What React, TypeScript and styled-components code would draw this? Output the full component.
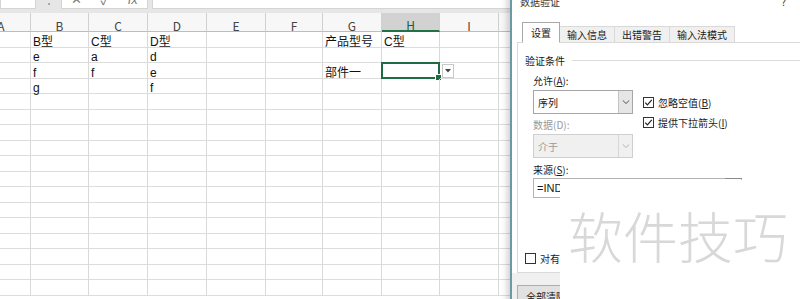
import React from "react";
import styled, { createGlobalStyle } from "styled-components";

const GlobalStyle = createGlobalStyle`
  html, body { margin: 0; padding: 0; background: #fff; }
  body {
    width: 800px;
    height: 299px;
    overflow: hidden;
    font-family: "Liberation Sans", "Noto Sans CJK SC", sans-serif;
  }
`;

const UI_FONT = `"Noto Sans CJK SC", "Liberation Sans", sans-serif`;

const columns = [
  { key: "A", w: 59 },
  { key: "B", w: 58 },
  { key: "C", w: 59 },
  { key: "D", w: 59 },
  { key: "E", w: 59 },
  { key: "F", w: 57 },
  { key: "G", w: 59 },
  { key: "H", w: 58 },
  { key: "I", w: 59 },
  { key: "J", w: 120 },
];

const data: Record<number, Record<string, string>> = {
  0: { B: "B型", C: "C型", D: "D型", G: "产品型号", H: "C型" },
  1: { B: "e", C: "a", D: "d" },
  2: { B: "f", C: "f", D: "e", G: "部件一" },
  3: { B: "g", D: "f" },
};

const ROW_COUNT = 17;
const ACTIVE_COL = "H";
const ACTIVE_ROW = 2;

const Screen = styled.div`
  position: relative;
  width: 800px;
  height: 299px;
  overflow: hidden;
  background: #fff;
`;

const Sheet = styled.div`
  display: flex;
  flex-direction: column;
  width: 800px;
`;

const FormulaBar = styled.div`
  display: flex;
  align-items: flex-start;
  height: 13px;
  background: #e6e6e6;
  overflow: hidden;
`;

const BarBox = styled.div<{ $w?: number }>`
  display: flex;
  align-items: center;
  justify-content: space-around;
  margin-top: -10px;
  height: 19px;
  width: ${(p) => (p.$w ? `${p.$w}px` : "auto")};
  flex: ${(p) => (p.$w ? "none" : "1")};
  background: #fff;
  border: 1px solid #d4d4d4;
  border-top: none;
  box-sizing: border-box;
  color: #7a7a7a;
  font-size: 13px;
`;

const BarDots = styled.div`
  width: 25px;
  margin-top: -10px;
  height: 19px;
  line-height: 19px;
  text-align: center;
  color: #888;
  font-size: 12px;
`;

const Grid = styled.div`
  display: grid;
  grid-template-columns: ${columns.map((c) => `${c.w}px`).join(" ")};
  grid-template-rows: 19px repeat(${ROW_COUNT}, 15.5px);
  margin-left: -28px;
`;

const ColHead = styled.div<{ $active?: boolean }>`
  display: flex;
  align-items: center;
  justify-content: center;
  padding-top: 6px;
  box-sizing: border-box;
  background: ${(p) => (p.$active ? "#d2d2d2" : "#f7f7f7")};
  border-right: 1px solid #d0d0d0;
  border-bottom: ${(p) => (p.$active ? "2px solid #217346" : "1px solid #bdbdbd")};
  color: ${(p) => (p.$active ? "#1c5e39" : "#444")};
  font-family: ${UI_FONT};
  font-size: 12px;
`;

const Cell = styled.div`
  position: relative;
  display: flex;
  align-items: flex-end;
  padding: 0 0 0 2px;
  box-sizing: border-box;
  border-right: 1px solid #d9d9d9;
  border-bottom: 1px solid #dcdcdc;
  font-size: 12px;
  line-height: 10px;
  color: #111;
  white-space: nowrap;
`;

const Selection = styled.div`
  position: absolute;
  top: -1px;
  left: -1px;
  right: -1px;
  bottom: -1px;
  border: 2px solid #1f6b42;
  pointer-events: none;
`;

const FillHandle = styled.div`
  position: absolute;
  right: -4px;
  bottom: -4px;
  width: 5px;
  height: 5px;
  background: #1f6b42;
  border: 1px solid #fff;
`;

const CellDropdown = styled.div`
  position: absolute;
  left: calc(100% + 3px);
  top: 1px;
  width: 12px;
  height: 14px;
  box-sizing: border-box;
  border: 1px solid #c8c8c8;
  background: #fff;
  display: flex;
  align-items: center;
  justify-content: center;
`;

const Dialog = styled.div`
  position: absolute;
  left: 510px;
  top: -9px;
  width: 300px;
  height: 320px;
  box-sizing: border-box;
  display: flex;
  flex-direction: column;
  background: #fff;
  border-left: 2px solid #6f98a5;
  box-shadow: -3px 0 6px rgba(0, 0, 0, 0.18);
  font-family: ${UI_FONT};
  font-size: 10px;
  color: #1a1a1a;
`;

const TitleBar = styled.div`
  display: flex;
  align-items: center;
  justify-content: space-between;
  height: 20px;
  padding: 0 24px 0 8px;
  font-size: 10px;
  color: #333;
`;

const TabStrip = styled.div`
  display: flex;
  align-items: flex-end;
  padding: 11px 0 0 10px;
  position: relative;
  z-index: 1;
`;

const Tab = styled.div<{ $active?: boolean }>`
  display: flex;
  align-items: center;
  justify-content: center;
  box-sizing: border-box;
  height: ${(p) => (p.$active ? "21px" : "17px")};
  width: ${(p) => (p.$active ? "38px" : "auto")};
  padding: ${(p) => (p.$active ? "0" : "0 7px")};
  margin-bottom: -1px;
  background: ${(p) => (p.$active ? "#fff" : "#f0f0f0")};
  border: 1px solid ${(p) => (p.$active ? "#a9a9a9" : "#d9d9d9")};
  border-bottom: 1px solid ${(p) => (p.$active ? "#fff" : "#d9d9d9")};
  border-left-width: ${(p) => (p.$active ? "1px" : "0")};
  white-space: nowrap;
`;

const Page = styled.div`
  margin-left: 5px;
  height: 231px;
  box-sizing: border-box;
  border: 1px solid #d9d9d9;
  border-right: none;
  background: #fff;
  display: flex;
  flex-direction: column;
  padding-left: 15px;
`;

const GroupHeader = styled.div`
  display: flex;
  align-items: center;
  gap: 7px;
  height: 14px;
  margin: 10px 0 0 -8px;
  &::after {
    content: "";
    flex: 1;
    height: 1px;
    background: #dcdcdc;
  }
`;

const FieldRow = styled.div`
  display: flex;
  gap: 10px;
  margin-top: 7px;
`;

const FieldColumn = styled.div`
  display: flex;
  flex-direction: column;
  width: 100px;
`;

const FieldLabel = styled.div<{ $gap: number; $disabled?: boolean }>`
  height: 14px;
  line-height: 14px;
  margin-top: ${(p) => p.$gap}px;
  color: ${(p) => (p.$disabled ? "#9a9a9a" : "#1a1a1a")};
  white-space: nowrap;
`;

const Combo = styled.div<{ $disabled?: boolean }>`
  display: flex;
  height: 24px;
  margin-top: 2px;
  box-sizing: border-box;
  border: 1px solid ${(p) => (p.$disabled ? "#cfcfcf" : "#a6a6a6")};
  background: ${(p) => (p.$disabled ? "#f0f0f0" : "#fff")};
  color: ${(p) => (p.$disabled ? "#9a9a9a" : "#1a1a1a")};
`;

const ComboText = styled.div`
  flex: 1;
  display: flex;
  align-items: center;
  padding-left: 4px;
`;

const ComboArrow = styled.div<{ $disabled?: boolean }>`
  width: 13px;
  display: flex;
  align-items: center;
  justify-content: center;
  border-left: 1px solid ${(p) => (p.$disabled ? "#d6d6d6" : "#c4c4c4")};
  background: ${(p) => (p.$disabled ? "#f0f0f0" : "#e6e6e6")};
`;

const CheckColumn = styled.div`
  display: flex;
  flex-direction: column;
  gap: 6px;
  margin-top: 21px;
`;

const CheckRow = styled.label<{ $offset?: number; $gap?: number }>`
  display: flex;
  align-items: center;
  gap: 4px;
  height: 14px;
  margin-left: ${(p) => p.$offset ?? 0}px;
  margin-top: ${(p) => p.$gap ?? 0}px;
  white-space: nowrap;
`;

const SourceInput = styled.div`
  position: relative;
  width: 209px;
  height: 20px;
  margin-top: 1px;
  box-sizing: border-box;
  border: 1px solid #b4b4b4;
  display: flex;
  align-items: center;
  padding-left: 3px;
  font-family: "Liberation Sans", sans-serif;
  font-size: 11px;
  &::after {
    content: "";
    position: absolute;
    right: -1px;
    top: -1px;
    width: 17px;
    height: 1px;
    background: #8a8a8a;
  }
`;

const Footer = styled.div`
  flex: 1;
  background: #f0f0f0;
  padding: 12px 0 0 5px;
`;

const FooterButton = styled.div`
  display: inline-flex;
  align-items: center;
  height: 22px;
  padding: 0 8px;
  box-sizing: border-box;
  border: 1px solid #adadad;
  background: #e1e1e1;
  white-space: nowrap;
`;

const Watermark = styled.div`
  position: absolute;
  left: 560px;
  top: 180px;
  width: 240px;
  height: 119px;
  box-sizing: border-box;
  background: #fff;
  padding: 27px 0 0 8px;
  font-family: "Noto Sans CJK SC", sans-serif;
  font-weight: 300;
  font-size: 55px;
  line-height: 55px;
  color: #d8d8d8;
  white-space: nowrap;
`;

function CheckBox({ checked }: { checked?: boolean }) {
  return (
    <svg width="11" height="11" viewBox="0 0 11 11">
      <rect x="0.5" y="0.5" width="10" height="10" fill="#fff" stroke="#333" />
      {checked && <path d="M2.2 5.6 L4.4 7.8 L8.8 2.8" fill="none" stroke="#222" strokeWidth="1.2" />}
    </svg>
  );
}

function Chevron({ color }: { color: string }) {
  return (
    <svg width="8" height="6" viewBox="0 0 8 6">
      <path d="M0.8 1.5 L4 4.5 L7.2 1.5" fill="none" stroke={color} strokeWidth="1" />
    </svg>
  );
}

export default function App() {
  return (
    <>
      <GlobalStyle />
      <Screen>
        <Sheet>
          <FormulaBar>
            <BarBox $w={36} />
            <BarDots>⋮</BarDots>
            <BarBox $w={87}>
              <span>✕</span>
              <span>✓</span>
              <span style={{ fontStyle: "italic" }}>fx</span>
            </BarBox>
            <div style={{ width: 4 }} />
            <BarBox />
          </FormulaBar>
          <Grid>
            {columns.map((c) => (
              <ColHead key={c.key} $active={c.key === ACTIVE_COL}>
                {c.key}
              </ColHead>
            ))}
            {Array.from({ length: ROW_COUNT }).map((_, r) =>
              columns.map((c) => {
                const active = r === ACTIVE_ROW && c.key === ACTIVE_COL;
                return (
                  <Cell key={`${r}-${c.key}`}>
                    {data[r]?.[c.key] ?? ""}
                    {active && (
                      <>
                        <Selection>
                          <FillHandle />
                        </Selection>
                        <CellDropdown>
                          <svg width="6" height="4" viewBox="0 0 6 4">
                            <path d="M0 0 H6 L3 3.5 Z" fill="#444" />
                          </svg>
                        </CellDropdown>
                      </>
                    )}
                  </Cell>
                );
              })
            )}
          </Grid>
        </Sheet>

        <Dialog>
          <TitleBar>
            <span>数据验证</span>
            <span>?</span>
          </TitleBar>
          <TabStrip>
            <Tab $active>设置</Tab>
            <Tab>输入信息</Tab>
            <Tab>出错警告</Tab>
            <Tab>输入法模式</Tab>
          </TabStrip>
          <Page>
            <GroupHeader>验证条件</GroupHeader>
            <FieldRow>
              <FieldColumn>
                <FieldLabel $gap={0}>
                  允许(<u>A</u>):
                </FieldLabel>
                <Combo>
                  <ComboText>序列</ComboText>
                  <ComboArrow>
                    <Chevron color="#555" />
                  </ComboArrow>
                </Combo>
                <FieldLabel $gap={4} $disabled>
                  数据(D):
                </FieldLabel>
                <Combo $disabled>
                  <ComboText>介于</ComboText>
                  <ComboArrow $disabled>
                    <Chevron color="#b5b5b5" />
                  </ComboArrow>
                </Combo>
                <FieldLabel $gap={5}>
                  来源(<u>S</u>):
                </FieldLabel>
              </FieldColumn>
              <CheckColumn>
                <CheckRow>
                  <CheckBox checked />
                  <span>
                    忽略空值(<u>B</u>)
                  </span>
                </CheckRow>
                <CheckRow>
                  <CheckBox checked />
                  <span>
                    提供下拉箭头(<u>I</u>)
                  </span>
                </CheckRow>
              </CheckColumn>
            </FieldRow>
            <SourceInput>=INDIRECT($H$2)</SourceInput>
            <CheckRow $offset={-8} $gap={53}>
              <CheckBox />
              <span>对有同样设置的所有其他单元格应用这些更改(P)</span>
            </CheckRow>
          </Page>
          <Footer>
            <FooterButton>全部清除(C)</FooterButton>
          </Footer>
        </Dialog>

        <Watermark>软件技巧</Watermark>
      </Screen>
    </>
  );
}
